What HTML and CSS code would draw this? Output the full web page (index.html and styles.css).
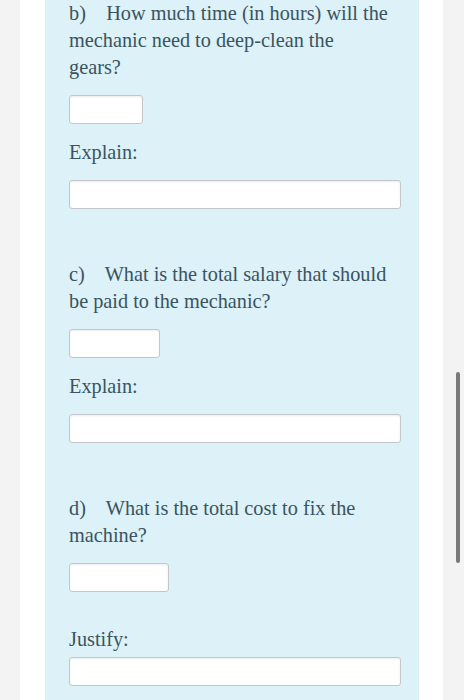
FILE: index.html
```html
<!DOCTYPE html>
<html>
<head>
<meta charset="utf-8">
<link rel="stylesheet" href="styles.css">
</head>
<body>
<div class="page">
  <div class="panel">
    <p class="q">b)&nbsp;&nbsp;&nbsp; How much time (in hours) will the mechanic need to deep-clean the gears?</p>
    <div class="field w1"></div>
    <p class="label">Explain:</p>
    <div class="field wide"></div>

    <p class="q q-next">c)&nbsp;&nbsp;&nbsp; What is the total salary that should be paid to the mechanic?</p>
    <div class="field w2"></div>
    <p class="label">Explain:</p>
    <div class="field wide"></div>

    <p class="q q-next">d)&nbsp;&nbsp;&nbsp; What is the total cost to fix the machine?</p>
    <div class="field w3"></div>
    <p class="label label-justify">Justify:</p>
    <div class="field wide"></div>
  </div>
</div>
<div class="scrollbar"></div>
</body>
</html>
```
FILE: styles.css
```css
html, body {
  margin: 0;
  padding: 0;
  height: 100%;
  overflow: hidden;
}
body {
  background: #f3f3f3;
  font-family: "Liberation Serif", "DejaVu Serif", serif;
  color: #3a545f;
}
.page {
  margin-left: 20px;
  width: 374px;
  height: 100%;
  background: #ffffff;
  padding: 0 24px 0 25px;
}
.panel {
  background: #dcf1f8;
  height: 100%;
  padding: 0 30px 0 24px;
  box-sizing: border-box;
  display: flex;
  flex-direction: column;
  align-items: flex-start;
}
.q, .label {
  margin: 0;
  font-size: 20.3px;
  line-height: 27px;
  width: 319px;
}
.q-next {
  margin-top: 52px;
}
.field {
  height: 27px;
  background: #ffffff;
  border: 1px solid #c4c6c8;
  border-radius: 3px;
  box-shadow: inset 0 1px 2px rgba(0, 0, 0, 0.08);
  margin-top: 14px;
}
.label {
  margin-top: 15px;
}
.label-justify {
  margin-top: 34px;
}
.label + .field {
  margin-top: 14px;
}
.label-justify + .field {
  margin-top: 4px;
}
.w1 { width: 72px; }
.w2 { width: 89px; }
.w3 { width: 98px; }
.wide { width: 330px; }
.scrollbar {
  position: fixed;
  left: 456px;
  top: 372px;
  width: 4px;
  height: 191px;
  border-radius: 2px;
  background: #7a7a7a;
}
```
